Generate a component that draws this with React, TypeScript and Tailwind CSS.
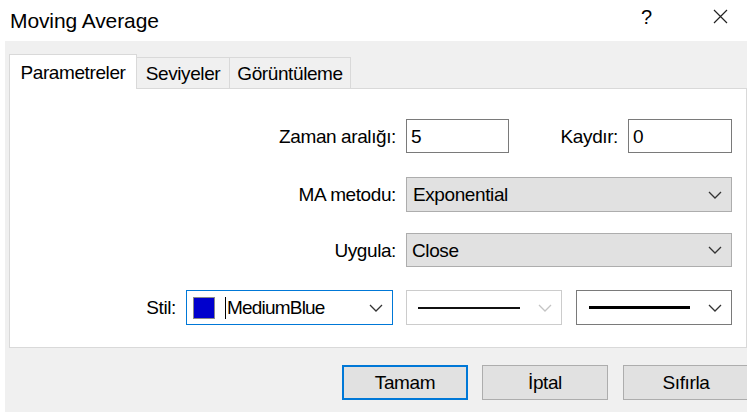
const Chevron = ({ color = "#333" }: { color?: string }) => (
  <svg width="14" height="8" viewBox="0 0 14 8" fill="none">
    <path d="M1 1l6 6 6-6" stroke={color} strokeWidth="1.3" />
  </svg>
);

const App = () => {
  return (
    <div
      className="w-[747px] h-[412px] bg-white overflow-hidden text-[19px] tracking-[-0.4px] text-black leading-none"
      style={{ fontFamily: '"Liberation Sans", Arial, sans-serif' }}
    >
      {/* Title bar */}
      <div className="h-[41px] flex items-center pl-[10px] relative">
        <span className="text-[21px] tracking-[-0.1px]">Moving Average</span>
        <span className="absolute left-[641px] top-[7px] text-[20px]">?</span>
        <svg className="absolute left-[713px] top-[9px]" width="15" height="15" viewBox="0 0 15 15">
          <path d="M1 1l13 13M14 1L1 14" stroke="#222" strokeWidth="1.2" />
        </svg>
      </div>

      {/* Body */}
      <div className="ml-[5px] h-[371px] bg-[#f0f0f0] pt-[12px]">
        {/* Tabs */}
        <div className="flex items-end h-[35px] ml-[4px]">
          <div className="w-[128px] h-[35px] bg-white border border-b-0 border-[#d9d9d9] flex items-center justify-center relative z-10 -mb-px">
            Parametreler
          </div>
          <div className="w-[93px] h-[31px] border border-l-0 border-b-0 border-[#d9d9d9] flex items-center justify-center">
            Seviyeler
          </div>
          <div className="w-[121px] h-[31px] border border-l-0 border-b-0 border-[#d9d9d9] flex items-center justify-center">
            Görüntüleme
          </div>
        </div>

        {/* Tab page */}
        <div className="ml-[4px] w-[738px] h-[260px] bg-white border border-[#d9d9d9] pt-[30px]">
          <div className="flex items-center h-[34px]">
            <div className="w-[386px] text-right">Zaman aralığı:</div>
            <div className="ml-[10px] w-[103px] h-[34px] border border-[#7a7a7a] flex items-center pl-[4px]">5</div>
            <div className="w-[109px] text-right">Kaydır:</div>
            <div className="ml-[10px] w-[104px] h-[34px] border border-[#7a7a7a] flex items-center pl-[4px]">0</div>
          </div>

          <div className="flex items-center h-[35px] mt-[24px]">
            <div className="w-[386px] text-right">MA metodu:</div>
            <div className="ml-[10px] w-[326px] h-[35px] bg-[#e1e1e1] border border-[#adadad] flex items-center justify-between pl-[6px] pr-[9px]">
              <span>Exponential</span>
              <Chevron />
            </div>
          </div>

          <div className="flex items-center h-[34px] mt-[21px]">
            <div className="w-[386px] text-right">Uygula:</div>
            <div className="ml-[10px] w-[326px] h-[34px] bg-[#e1e1e1] border border-[#adadad] flex items-center justify-between pl-[5px] pr-[9px]">
              <span>Close</span>
              <Chevron />
            </div>
          </div>

          <div className="flex items-center h-[35px] mt-[23px]">
            <div className="w-[166px] text-right">Stil:</div>
            <div className="ml-[10px] w-[207px] h-[35px] border border-[#0078d7] flex items-center pl-[6px] pr-[9px]">
              <div className="w-[22px] h-[22px] bg-[#0000cd] border border-[#8a8a8a]" />
              <div className="ml-[10px] w-px h-[22px] bg-black" />
              <span className="ml-[1px] tracking-[-0.8px]">MediumBlue</span>
              <div className="ml-auto">
                <Chevron />
              </div>
            </div>
            <div className="ml-[13px] w-[156px] h-[35px] border border-[#cccccc] flex items-center pl-[11px] pr-[9px]">
              <div className="w-[102px] h-[2px] bg-[#111]" />
              <div className="ml-auto">
                <Chevron color="#c4c4c4" />
              </div>
            </div>
            <div className="ml-[14px] w-[156px] h-[35px] border border-[#7a7a7a] flex items-center pl-[12px] pr-[9px]">
              <div className="w-[101px] h-[3px] bg-black" />
              <div className="ml-auto">
                <Chevron />
              </div>
            </div>
          </div>
        </div>

        {/* Dialog buttons */}
        <div className="flex mt-[17px] ml-[337px] gap-[14px] w-[420px]">
          <button className="shrink-0 w-[126px] h-[35px] bg-[#e1e1e1] border-2 border-[#0078d7] flex items-center justify-center">
            Tamam
          </button>
          <button className="shrink-0 w-[126px] h-[35px] bg-[#e1e1e1] border border-[#adadad] flex items-center justify-center">
            İptal
          </button>
          <button className="shrink-0 w-[126px] h-[35px] bg-[#e1e1e1] border border-[#adadad] flex items-center justify-center ml-[1px]">
            Sıfırla
          </button>
        </div>
      </div>
    </div>
  );
};

export default App;
